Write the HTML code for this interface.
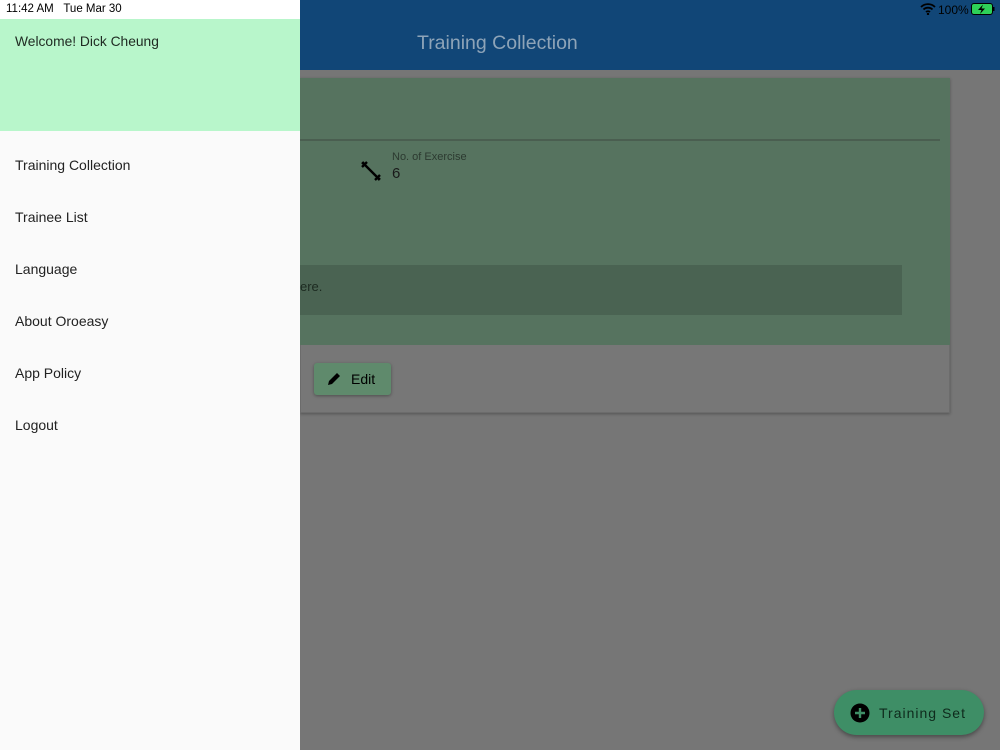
<!DOCTYPE html>
<html><head><meta charset="utf-8"><style>
*{margin:0;padding:0;box-sizing:border-box}
body{width:1000px;height:750px;overflow:hidden;position:relative;background:#767676;font-family:"Liberation Sans",sans-serif}
.abs{position:absolute}
</style></head><body>
<div class="abs" style="left:0;top:0;width:1000px;height:70px;background:#114677"></div>
<div class="abs" style="left:417px;top:32px;font-size:19.5px;color:#8ea4b8">Training Collection</div>
<div class="abs" style="left:938px;top:3px;font-size:12px;color:#000">100%</div>
<svg class="abs" style="left:920px;top:3px" width="16" height="12" viewBox="0 0 16 12"><path d="M1 4a10 10 0 0 1 14 0M3.5 6.5a6.5 6.5 0 0 1 9 0M6 9a3 3 0 0 1 4 0" stroke="#000" stroke-width="1.8" fill="none"/><circle cx="8" cy="11" r="1.2"/></svg>
<svg class="abs" style="left:971px;top:3px" width="24" height="12" viewBox="0 0 24 12"><rect x="0.5" y="0.5" width="21" height="11" rx="2.5" fill="#2ed158" stroke="#000"/><rect x="22" y="4" width="1.5" height="4" fill="#000"/><path d="M12 1.5L7 7h3.5l-1.5 4 5-5.5h-3.5z" fill="#000"/></svg>
<div class="abs" style="left:300px;top:78px;width:650px;height:335px;background:#777;border:1px solid #6c6c6c;box-shadow:0 1px 3px rgba(0,0,0,.3)"></div>
<div class="abs" style="left:300px;top:78px;width:650px;height:267px;background:#56735f"></div>
<div class="abs" style="left:300px;top:139px;width:640px;height:2px;background:#4a5e50"></div>
<div class="abs" style="left:300px;top:265px;width:602px;height:50px;background:#4a6352"></div>
<div class="abs" style="left:300px;top:279px;font-size:13px;color:#1c2a20">ere.</div>
<svg class="abs" style="left:361px;top:161px" width="20" height="20" viewBox="0 0 20 20"><path d="M3 3l14 14M1 6l5-5M3 1l-2 2M14 19l5-5M17 19l2-2" stroke="#000" stroke-width="2.4" fill="none"/></svg>
<div class="abs" style="left:392px;top:151px;font-size:11px;color:#2c3a30">No. of Exercise</div>
<div class="abs" style="left:392px;top:165px;font-size:15px;color:#1a1a1a">6</div>
<div class="abs" style="left:314px;top:363px;width:77px;height:32px;background:#5f8a6c;border-radius:3px;box-shadow:0 1px 3px rgba(0,0,0,.35)"></div>
<svg class="abs" style="left:326px;top:371px" width="16" height="16" viewBox="0 0 16 16"><path d="M2 14l1-4 8-8 3 3-8 8z" fill="#000"/></svg>
<div class="abs" style="left:351px;top:371px;font-size:14px;color:#000">Edit</div>
<div class="abs" style="left:834px;top:690px;width:150px;height:45px;background:#3e8e66;border-radius:23px;box-shadow:0 2px 5px rgba(0,0,0,.4)"></div>
<svg class="abs" style="left:850px;top:703px" width="20" height="20" viewBox="0 0 20 20"><circle cx="10" cy="10" r="9.5" fill="#000"/><path d="M10 5v10M5 10h10" stroke="#3e8e66" stroke-width="2.4"/></svg>
<div class="abs" style="left:879px;top:705px;font-size:14px;letter-spacing:1px;color:#0e2a1c">Training Set</div>
<div class="abs" style="left:0;top:0;width:300px;height:750px;background:#fafafa"></div>
<div class="abs" style="left:0;top:0;width:300px;height:19px;background:#fff"></div>
<div class="abs" style="left:6px;top:3px;font-size:11.5px;color:#000">11:42 AM&nbsp;&nbsp;&nbsp;Tue Mar 30</div>
<div class="abs" style="left:0;top:19px;width:300px;height:112px;background:#b8f6cb"></div>
<div class="abs" style="left:15px;top:34px;font-size:13.8px;color:#1f2a22">Welcome! Dick Cheung</div>
<div class="abs" style="left:15px;top:157px;font-size:14px;color:#222;line-height:16px">Training Collection</div>
<div class="abs" style="left:15px;top:209px;font-size:14px;color:#222;line-height:16px">Trainee List</div>
<div class="abs" style="left:15px;top:261px;font-size:14px;color:#222;line-height:16px">Language</div>
<div class="abs" style="left:15px;top:313px;font-size:14px;color:#222;line-height:16px">About Oroeasy</div>
<div class="abs" style="left:15px;top:365px;font-size:14px;color:#222;line-height:16px">App Policy</div>
<div class="abs" style="left:15px;top:417px;font-size:14px;color:#222;line-height:16px">Logout</div>
</body></html>
